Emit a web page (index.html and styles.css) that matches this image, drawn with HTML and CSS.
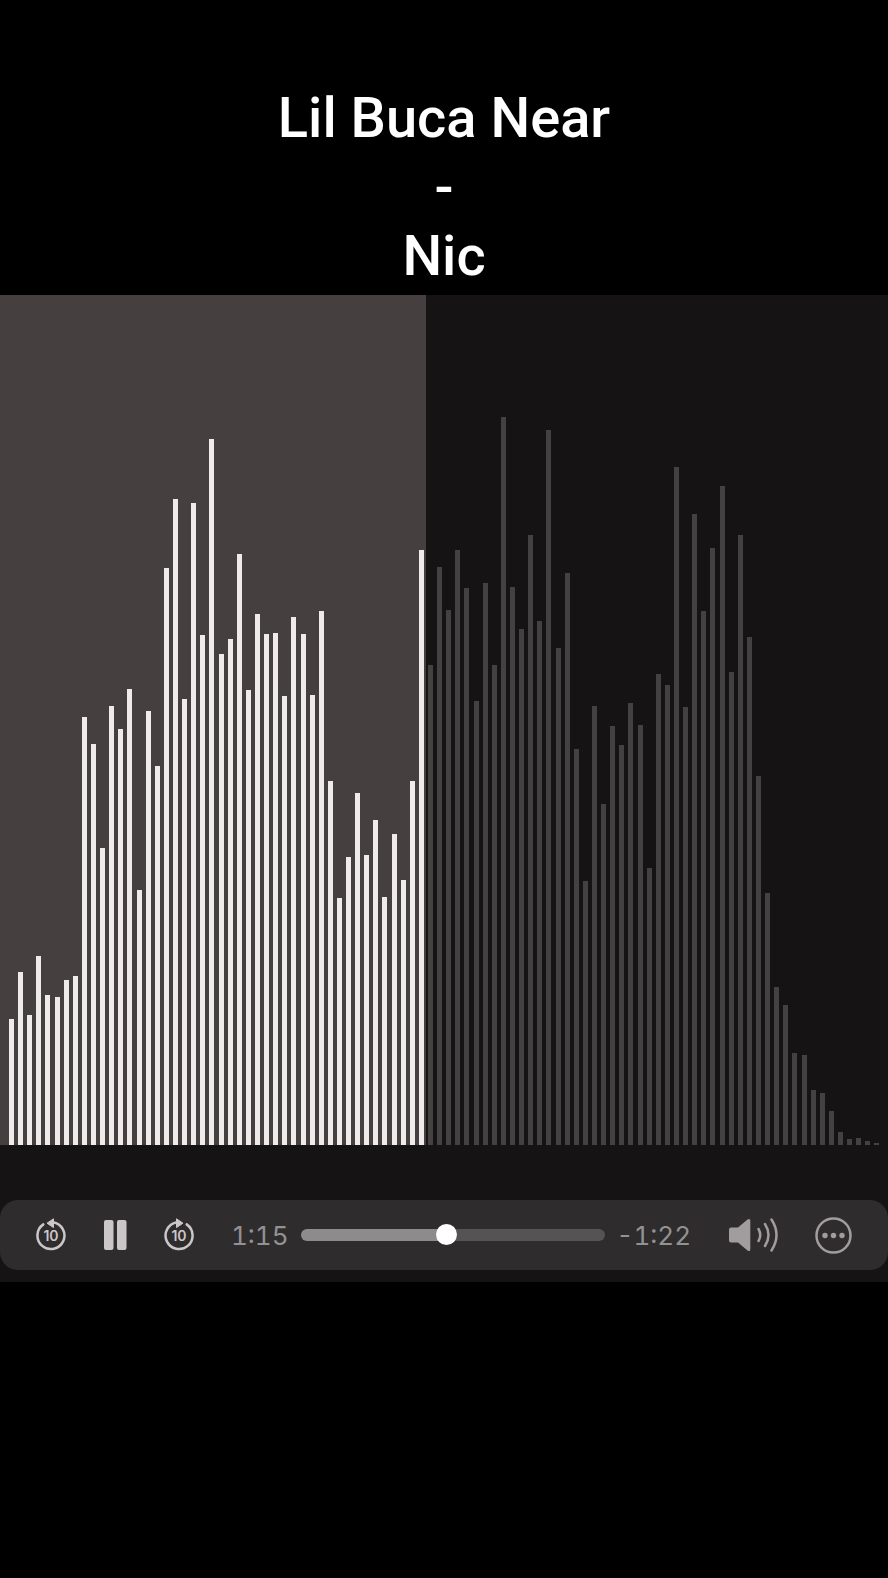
FILE: index.html
```html
<!DOCTYPE html>
<html lang="en">

<head>
    <meta charset="UTF-8">
    <meta name="viewport" content="width=device-width, initial-scale=1.0">
    <title>Lil Buca Near - Nic</title>
    <link rel="stylesheet" href="styles.css">
</head>

<body>
    <h1 class="title">Lil Buca Near<br>-<br>Nic</h1>
    <main class="player">
        <!-- waveform bars are added by player.js -->
        <div class="waveform"></div>
        <!-- controls -->
        <section class="controls">
            <button type="button" class="skip" aria-label="Back 10 seconds">
                <svg width="30" height="34" viewBox="0 0 30 34">
                    <path d="M17 4.200A13.500 13.500 0 1 1 7.300 6.400" class="ring" />
                    <path d="M11 5.200L17.500 .8V9.600z" class="arrow" />
                    <text x="15" y="23">10</text>
                </svg>
            </button>
            <button type="button" class="pause" aria-label="Pause">
                <svg width="24" height="34" viewBox="0 0 24 34">
                    <rect x="1" y="2" width="9.500" height="30" rx="2" class="fill" />
                    <rect x="14" y="2" width="9.500" height="30" rx="2" class="fill" />
                </svg>
            </button>
            <button type="button" class="skip" aria-label="Forward 10 seconds">
                <svg width="30" height="34" viewBox="0 0 30 34">
                    <path d="M13 4.200A13.500 13.500 0 1 0 22.700 6.400" class="ring" />
                    <path d="M19 5.200L12.500 .8V9.600z" class="arrow" />
                    <text x="15" y="23">10</text>
                </svg>
            </button>
            <div class="timeline">
                <span class="time">1:15</span>
                <input type="range" class="seek" min="0" max="157" value="75" aria-label="Seek">
                <span class="time">-1:22</span>
            </div>
            <button type="button" class="volume" aria-label="Volume">
                <svg width="50" height="36" viewBox="0 0 50 36">
                    <path d="M3 10.500H10L19.500 2.500Q22.300 1 22.300 3.500V32.500Q22.300 35 19.500 33.500L10 25.500H3Q1 25.500 1 23.500V12.500Q1 10.500 3 10.500z" class="fill" />
                    <path d="M30.500 12Q34 18 30.500 24M37 7Q44 18 37 29M43.500 2.500Q53.500 18 43.500 33.500" class="wave" />
                </svg>
            </button>
            <button type="button" class="more" aria-label="More options">
                <svg width="37" height="37" viewBox="0 0 37 37">
                    <circle cx="18.500" cy="18.500" r="17" class="ring" />
                    <circle cx="10" cy="18.500" r="2.700" class="fill" />
                    <circle cx="18.500" cy="18.500" r="2.700" class="fill" />
                    <circle cx="27" cy="18.500" r="2.700" class="fill" />
                </svg>
            </button>
        </section>
    </main>
    <script src="player.js"></script>
</body>

</html>
```
FILE: styles.css
```css
body {
    margin: 0;
    min-height: 100vh;
    background: #000;
    font-family: Inter, "Liberation Sans", sans-serif;
}

.title {
    margin: 0;
    padding: 84px 20px 4px;
    color: #fff;
    font-family: Roboto, "Liberation Sans", sans-serif;
    font-size: 56px;
    font-weight: 500;
    line-height: 69px;
    text-align: center;
}

.player {
    padding-bottom: 12px;
    background: #151314;
}

.waveform {
    display: flex;
    align-items: flex-end;
    justify-content: space-between;
    height: 850px;
    padding: 0 8px 0 9px;
    background: linear-gradient(to right, #453f3f 48%, #151314 48%);
}

.bar {
    width: 5px;
    background: #434141;
}

.bar.played {
    background: #efebea;
}

.controls {
    display: flex;
    align-items: center;
    gap: 37px;
    height: 70px;
    margin-top: 55px;
    padding: 0 36px;
    border-radius: 18px;
    background: #2e2c2d;
    color: #cbc7c8;
}

.controls button {
    flex: none;
    padding: 0;
    border: 0;
    background: none;
    color: inherit;
    font-family: inherit;
    cursor: pointer;
}

.controls svg {
    display: block;
}

.fill {
    fill: currentColor;
}

.ring,
.wave {
    fill: none;
    stroke: currentColor;
    stroke-width: 2.5;
    stroke-linecap: round;
}

.arrow {
    fill: currentColor;
    stroke: currentColor;
    stroke-linejoin: round;
}

.skip text {
    fill: currentColor;
    font-size: 14px;
    font-weight: 600;
    text-anchor: middle;
}

.controls .volume,
.controls .more {
    color: #a19d9e;
}

.timeline {
    display: flex;
    flex: 1;
    align-items: center;
    gap: 12px;
    min-width: 0;
}

.time {
    color: #949192;
    font-size: 26px;
    font-variant-numeric: tabular-nums;
}

.seek {
    flex: 1;
    min-width: 0;
    height: 21px;
    margin: 0;
    background: none;
    appearance: none;
    cursor: pointer;
}

.seek::-webkit-slider-runnable-track {
    height: 12px;
    border-radius: 6px;
    background: linear-gradient(to right, #8e8b8c 48%, #565354 48%);
}

.seek::-webkit-slider-thumb {
    width: 21px;
    height: 21px;
    margin-top: -5px;
    border-radius: 50%;
    background: #fff;
    appearance: none;
}
```
FILE: player.js
```js
const levels = [
    126, 173, 130, 189, 150, 148, 165, 169, 428, 401, 297, 439,
    416, 456, 255, 434, 379, 577, 646, 446, 642, 510, 706, 491,
    506, 591, 455, 531, 511, 512, 449, 528, 511, 450, 534, 364,
    247, 288, 352, 290, 325, 248, 311, 265, 364, 595, 480, 578,
    535, 595, 557, 444, 562, 480, 728, 558, 516, 610, 524, 715,
    497, 572, 396, 264, 439, 341, 419, 400, 442, 420, 277, 471,
    460, 678, 438, 631, 534, 597, 659, 473, 610, 508, 369, 252,
    158, 140, 92, 90, 55, 52, 34, 13, 6, 7, 4, 2
];
const waveform = document.querySelector('.waveform');
const seek = document.querySelector('.seek');
const played = seek.value / seek.max;

levels.forEach(function (level, i) {
    let bar = document.createElement('div');
    bar.className = i / levels.length < played ? 'bar played' : 'bar';
    bar.style.height = level + 'px';
    waveform.appendChild(bar);
});
```
